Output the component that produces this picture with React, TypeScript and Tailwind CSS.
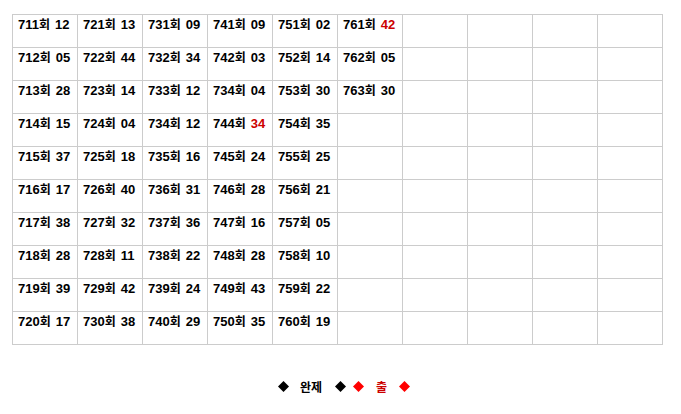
const COLS: [number, string, boolean?][][] = [
  [[711, "12"], [712, "05"], [713, "28"], [714, "15"], [715, "37"], [716, "17"], [717, "38"], [718, "28"], [719, "39"], [720, "17"]],
  [[721, "13"], [722, "44"], [723, "14"], [724, "04"], [725, "18"], [726, "40"], [727, "32"], [728, "11"], [729, "42"], [730, "38"]],
  [[731, "09"], [732, "34"], [733, "12"], [734, "12"], [735, "16"], [736, "31"], [737, "36"], [738, "22"], [739, "24"], [740, "29"]],
  [[741, "09"], [742, "03"], [734, "04"], [744, "34", true], [745, "24"], [746, "28"], [747, "16"], [748, "28"], [749, "43"], [750, "35"]],
  [[751, "02"], [752, "14"], [753, "30"], [754, "35"], [755, "25"], [756, "21"], [757, "05"], [758, "10"], [759, "22"], [760, "19"]],
  [[761, "42", true], [762, "05"], [763, "30"]],
];

const KR = { fontFamily: '"Noto Sans CJK KR", sans-serif' };

function Diamond({ red }: { red?: boolean }) {
  return (
    <svg width="11" height="11" viewBox="0 0 11 11" className="block">
      <polygon points="5.5,0 11,5.5 5.5,11 0,5.5" fill={red ? "#ff0000" : "#000"} />
    </svg>
  );
}

export default function App() {
  const cells = [];
  for (let r = 0; r < 10; r++) {
    for (let c = 0; c < 10; c++) {
      const item = COLS[c]?.[r];
      cells.push(
        <div key={`${r}-${c}`} className="h-[32px] bg-white pl-[5px] pt-[1px] text-[13px] leading-[15px] font-bold text-black whitespace-nowrap">
          {item && (
            <>
              {item[0]}
              <span className="text-[12px]" style={KR}>회</span>
              <span className={item[2] ? "ml-[5px] text-[#cc0000]" : "ml-[5px]"}>{item[1]}</span>
            </>
          )}
        </div>
      );
    }
  }
  return (
    <div
      className="w-[681px] h-[414px] bg-white pt-[14px]"
      style={{ fontFamily: '"Liberation Sans", "Noto Sans CJK KR", sans-serif' }}
    >
      <div className="ml-[12px] w-[651px] grid grid-cols-[repeat(10,64px)] gap-px bg-[#cccccc] p-px">
        {cells}
      </div>
      <div className="mt-[36px] flex items-center h-[11px] pl-[278px] text-[12px] font-bold leading-[12px]" style={KR}>
        <Diamond />
        <span className="ml-[11px] text-black">완제</span>
        <span className="ml-[13px]"><Diamond /></span>
        <span className="ml-[7px]"><Diamond red /></span>
        <span className="ml-[12px] text-[#cc0000]">출</span>
        <span className="ml-[12px]"><Diamond red /></span>
      </div>
    </div>
  );
}
